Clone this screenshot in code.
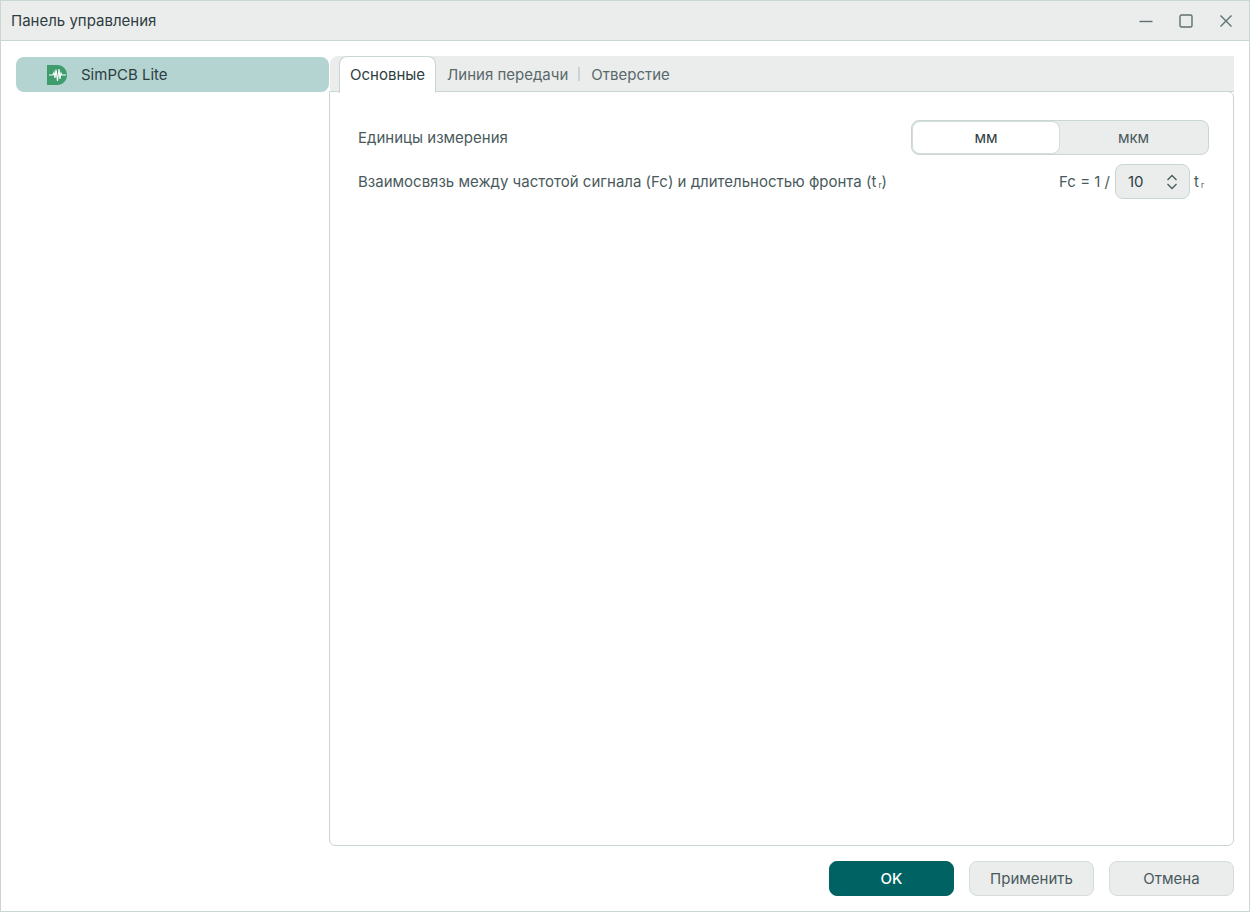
<div class="window">
  <header class="titlebar">
    <span class="title">Панель управления</span>
    <div class="controls">
      <svg viewBox="0 0 14 14" width="14" height="14"><path d="M0.500 7.500H13.500" /></svg>
      <svg viewBox="0 0 14 14" width="14" height="14"><rect x="1" y="1" width="12" height="12" rx="1.500" /></svg>
      <svg viewBox="0 0 14 14" width="14" height="14"><path d="M1.500 1.500L12.500 12.500M12.500 1.500L1.500 12.500" /></svg>
    </div>
  </header>
  <div class="body">
    <aside class="sidebar">
      <div class="nav-item">
        <svg class="logo" viewBox="0 0 20 20" width="20" height="20">
          <path d="M0 0H10C16 0 20 4.500 20 10C20 15.500 16 20 10 20H0Z" fill="#3f9c6c" />
          <path d="M2 10H6L7 7.500L8 13L9 4.500L10.500 16L12 4L13 14L14 8L15 10H19" fill="none" stroke="#fff" stroke-width="1.100" />
        </svg>
        <span>SimPCB Lite</span>
      </div>
    </aside>
    <main class="main">
      <div class="tabs">
        <div class="tab active">Основные</div>
        <div class="tab">Линия передачи</div>
        <div class="sep"></div>
        <div class="tab">Отверстие</div>
      </div>
      <section class="panel">
        <div class="row units">
          <span>Единицы измерения</span>
          <div class="segmented">
            <div class="seg on">мм</div>
            <div class="seg">мкм</div>
          </div>
        </div>
        <div class="row relation">
          <span>Взаимосвязь между частотой сигнала (Fc) и длительностью фронта (t<sub>r</sub>)</span>
          <div class="formula">
            <span>Fc = 1 /</span>
            <div class="spin">
              <span class="val">10</span>
              <svg viewBox="0 0 12 18" width="12" height="18"><path d="M1.500 7L6 2.500L10.500 7M1.500 11L6 15.500L10.500 11" /></svg>
            </div>
            <span class="tr">t<sub>r</sub></span>
          </div>
        </div>
      </section>
    </main>
  </div>
  <footer class="footer">
    <button class="primary">OK</button>
    <button>Применить</button>
    <button>Отмена</button>
  </footer>
</div>

<style>
  :global(body) { margin: 0; background: #fff; }
  .window {
    box-sizing: border-box;
    width: 1250px;
    height: 912px;
    border: 1px solid #c9d6d4;
    display: flex;
    flex-direction: column;
    font: 15px/20px Inter, "Noto Sans", sans-serif;
    color: #4a5a5c;
    background: #fff;
  }
  .titlebar {
    box-sizing: border-box;
    height: 40px;
    flex: none;
    background: #ebeded;
    border-bottom: 1px solid #c9d6d4;
    display: flex;
    align-items: center;
    justify-content: space-between;
    padding: 0 16px 0 10px;
  }
  .title { color: #2f3d3f; }
  .controls { display: flex; gap: 26px; }
  .controls svg { fill: none; stroke: #5f6e70; stroke-width: 1.400; display: block; }
  .body { flex: 1; display: flex; min-height: 0; padding-top: 15px; }
  .sidebar { width: 328px; flex: none; padding: 1px 0 0 15px; box-sizing: border-box; }
  .nav-item {
    height: 35px;
    border-radius: 8px;
    background: #b3d4d1;
    display: flex;
    align-items: center;
    padding-left: 31px;
    color: #2f3d3f;
    gap: 14px;
  }
  .logo { display: block; }
  .main { width: 905px; flex: none; display: flex; flex-direction: column; }
  .tabs {
    box-sizing: border-box;
    margin-left: 1px;
    height: 36px;
    flex: none;
    background: #ebeded;
    display: flex;
    align-items: center;
    position: relative;
    z-index: 1;
    padding-left: 9px;
    border-bottom: 1px solid #c9d6d4;
    border-radius: 8px 0 0 0;
  }
  .tab { padding: 0 11px; height: 36px; line-height: 37px; box-sizing: border-box; color: #5a686a; }
  .tab.active {
    background: #fff;
    border: 1px solid #c9d6d4;
    border-bottom: none;
    border-radius: 8px 8px 0 0;
    padding: 0 10px;
    color: #2f3d3f;
    height: 37px;
    align-self: flex-start;
    line-height: 35px;
  }
  .sep { width: 2px; height: 14px; background: #c9d4d3; margin-left: -1px; }
  .panel {
    flex: 1;
    margin-top: -1px;
    box-sizing: border-box;
    border: 1px solid #c9d6d4;
    border-radius: 0 6px 6px 6px;
    padding: 28px 24px 0 28px;
    display: flex;
    flex-direction: column;
  }
  .row { display: flex; justify-content: space-between; align-items: center; }
  .units { height: 35px; }
  .relation { margin-top: 9px; height: 35px; }
  .segmented {
    box-sizing: border-box;
    width: 298px;
    height: 35px;
    border: 1px solid #c9d6d4;
    border-radius: 8px;
    background: #ebeded;
    display: flex;
  }
  .seg { flex: 1; display: flex; align-items: center; justify-content: center; color: #4a5a5c; }
  .seg.on {
    background: #fff;
    border-radius: 7px;
    color: #2f3d3f;
    margin: 1px 0 1px 1px;
    flex: none;
    width: 146px;
    box-shadow: 0 0 0 1px #d3dddc;
  }
  .formula { display: flex; align-items: center; gap: 5px; margin-right: 4px; }
  .spin {
    box-sizing: border-box;
    width: 75px;
    height: 35px;
    border: 1px solid #c9d6d4;
    border-radius: 8px;
    background: #ebeded;
    display: flex;
    align-items: center;
    justify-content: space-between;
    padding: 0 11px 0 12px;
    color: #2f3d3f;
  }
  .spin svg { fill: none; stroke: #4a5a5c; stroke-width: 1.300; display: block; }
  .tr { width: 11px; white-space: nowrap; margin-left: -1px; }
  sub { font-size: 8px; line-height: 0; vertical-align: -1px; margin-left: 2px; }
  .footer {
    height: 65px;
    flex: none;
    box-sizing: border-box;
    padding: 15px 15px 0 0;
    display: flex;
    justify-content: flex-end;
    gap: 15px;
  }
  button {
    box-sizing: border-box;
    width: 125px;
    height: 35px;
    border: 1px solid #d3dcdb;
    border-radius: 8px;
    background: #ebeded;
    color: #4a5a5c;
    font: inherit;
    padding: 0;
  }
  button.primary { background: #006262; border-color: #006262; color: #fff; font-weight: 500; }
</style>
